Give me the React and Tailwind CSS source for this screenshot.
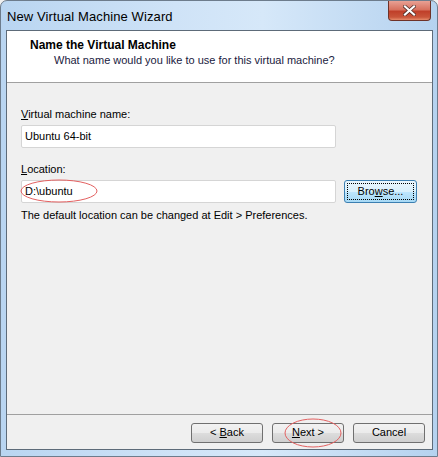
import React from "react";

const font = { fontFamily: '"Liberation Sans", Arial, sans-serif' };

function Btn({ children, focused, className = "" }) {
  return (
    <div
      className={
        "relative flex items-center justify-center rounded-[3px] border text-[11px] text-black " +
        (focused
          ? "border-[#3c7fb1] bg-[linear-gradient(#eaf6fd_0%,#d9f0fc_50%,#bee6fd_51%,#a7d9f5_100%)] "
          : "border-[#707070] bg-[linear-gradient(#f2f2f2_0%,#ebebeb_50%,#dddddd_51%,#cfcfcf_100%)] ") +
        className
      }
    >
      {focused && (
        <div className="absolute inset-[2px] border border-dotted border-black rounded-[1px]" />
      )}
      <span className="relative">{children}</span>
    </div>
  );
}

export default function App() {
  return (
    <div
      className="relative w-[438px] h-[457px] overflow-hidden bg-[#f0f0f0]"
      style={font}
    >
      <div className="w-[438px] h-[457px] flex flex-col rounded-t-[7px] border border-[#6d7c8c] bg-[linear-gradient(90deg,#b9d5f1_0%,#cfe3f7_40%,#d6e8f9_60%,#b5d2ef_100%)]">
        {/* title bar */}
        <div className="h-[29px] flex items-start justify-between">
          <div className="pl-[6px] pt-[6px] text-[13px] text-black tracking-[0.1px]">
            New Virtual Machine Wizard
          </div>
          <div className="mr-[6px] w-[43px] h-[20px] rounded-b-[4px] border border-t-0 border-[#6e3228] bg-[linear-gradient(#e8a194_0%,#d7725f_45%,#c0402a_55%,#c9553a_85%,#e68c6c_100%)] flex items-center justify-center">
            <svg width="13" height="11" viewBox="0 0 13 11">
              <path
                d="M2 1.5 L11 9.5 M11 1.5 L2 9.5"
                stroke="#4b2a24"
                strokeWidth="3.6"
                strokeLinecap="square"
              />
              <path
                d="M2 1.5 L11 9.5 M11 1.5 L2 9.5"
                stroke="#ffffff"
                strokeWidth="2.2"
                strokeLinecap="square"
              />
            </svg>
          </div>
        </div>
        {/* client area */}
        <div className="ml-[5px] mr-[4px] flex-1 flex flex-col border border-[#5d6b79] bg-[#f0f0f0]">
          <div className="h-[52px] bg-white border-b border-[#a0a0a0] pt-[7px]">
            <div className="pl-[23px] text-[12px] font-bold text-black leading-[15px]">
              Name the Virtual Machine
            </div>
            <div className="pl-[47px] text-[11px] text-[#1a1a40] leading-[15px]">
              What name would you like to use for this virtual machine?
            </div>
          </div>
          <div className="flex-1 flex flex-col px-[14px] pt-[24px]">
            <div className="text-[11px] text-black leading-[15px]">
              <span className="underline">V</span>irtual machine name:
            </div>
            <div className="mt-[3px] w-[315px] h-[23px] bg-white border border-[#d5d5d5] rounded-[2px] flex items-center px-[3px] text-[11px] text-black">
              Ubuntu 64-bit
            </div>
            <div className="mt-[14px] text-[11px] text-black leading-[15px]">
              <span className="underline">L</span>ocation:
            </div>
            <div className="mt-[3px] flex gap-[8px]">
              <div className="relative w-[315px] h-[23px] bg-white border border-[#d5d5d5] rounded-[2px] flex items-center px-[3px] text-[11px] text-black">
                D:\ubuntu
                <svg
                  className="absolute left-[-2px] top-[-3px]"
                  width="80"
                  height="26"
                  viewBox="0 0 80 26"
                >
                  <ellipse
                    cx="39"
                    cy="13"
                    rx="38"
                    ry="11"
                    fill="none"
                    stroke="#e36060"
                    strokeWidth="1"
                  />
                </svg>
              </div>
              <Btn focused className="w-[73px] h-[23px]">
                Bro<span className="underline">w</span>se...
              </Btn>
            </div>
            <div className="mt-[5px] text-[11px] text-black leading-[15px]">
              The default location can be changed at Edit &gt; Preferences.
            </div>
          </div>
          <div className="border-t border-[#a0a0a0] h-[35px] flex items-center justify-end gap-[9px] pr-[7px] pt-[1px]">
            <Btn className="w-[72px] h-[20px]">
              &lt; <span className="underline">B</span>ack
            </Btn>
            <div className="relative">
              <Btn className="w-[72px] h-[20px]">
                <span className="underline">N</span>ext &gt;
              </Btn>
              <svg
                className="absolute left-[12px] top-[-6px]"
                width="58"
                height="32"
                viewBox="0 0 58 32"
              >
                <ellipse
                  cx="29"
                  cy="16"
                  rx="28"
                  ry="14"
                  fill="none"
                  stroke="#e36060"
                  strokeWidth="1"
                />
              </svg>
            </div>
            <Btn className="w-[72px] h-[20px]">Cancel</Btn>
          </div>
        </div>
        <div className="h-[6px]" />
      </div>
    </div>
  );
}
